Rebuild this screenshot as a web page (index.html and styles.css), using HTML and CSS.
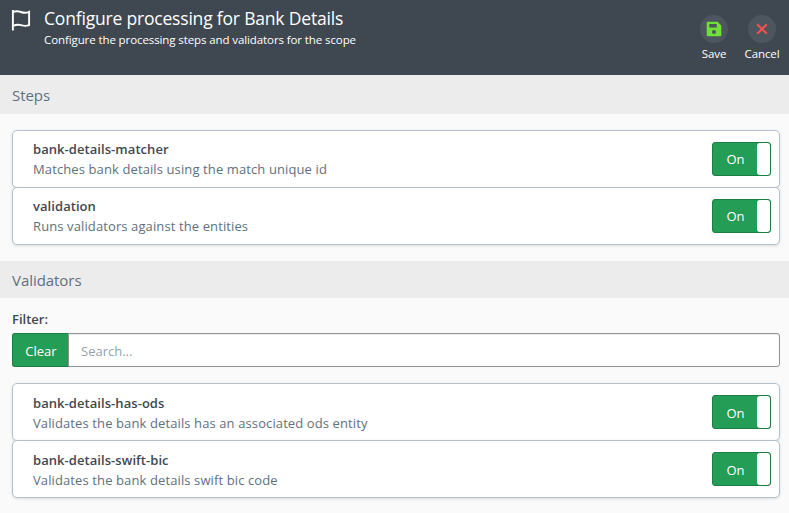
FILE: index.html
```html
<!DOCTYPE html>
<html lang="en">
<head>
<meta charset="utf-8">
<title>Configure processing</title>
<link rel="stylesheet" href="styles.css">
</head>
<body>
<header class="header">
  <svg class="flag" width="20" height="22" viewBox="0 0 20 22" fill="none" stroke="#fff" stroke-width="1.9">
    <path d="M1.900 1V21.500M2 3C5 1.800 7.500 2 10 3S15.500 4 18.100 2.800V16.200C15.500 17.200 12.500 17 10 16.200S5 15.500 2 17"/>
  </svg>
  <div class="heading">
    <h1 class="title">Configure processing for Bank Details</h1>
    <p class="subtitle">Configure the processing steps and validators for the scope</p>
  </div>
  <div class="actions">
    <button class="action"><span class="disc"><svg width="16" height="16" viewBox="0 0 16 16"><path fill="#6ee038" fill-rule="evenodd" d="M2 .7H11.500L15.300 4.500V14Q15.300 15.300 14 15.300H2Q.7 15.300 .7 14V2Q.7 .7 2 .7ZM3.300 3V6.500H10.800V3ZM8 8.900A2.100 2.100 0 1 0 8 13.100A2.100 2.100 0 1 0 8 8.900Z"/></svg></span><span>Save</span></button>
    <button class="action"><span class="disc"><svg width="12" height="12" viewBox="0 0 12 12"><path stroke="#f0524f" stroke-width="2.2" d="M1.200 1.200L10.800 10.800M10.800 1.200L1.200 10.800"/></svg></span><span>Cancel</span></button>
  </div>
</header>
<main>
  <h2 class="band band-first">Steps</h2>
  <section class="cards">
    <article class="card"><div class="info"><h3>bank-details-matcher</h3><p>Matches bank details using the match unique id</p></div><div class="toggle"><span class="on">On</span><span class="handle"></span></div></article>
    <article class="card"><div class="info"><h3>validation</h3><p>Runs validators against the entities</p></div><div class="toggle"><span class="on">On</span><span class="handle"></span></div></article>
  </section>
  <h2 class="band">Validators</h2>
  <label class="filter-label" for="q">Filter:</label>
  <div class="filter"><button class="clear">Clear</button><input id="q" class="search" type="text" placeholder="Search..."></div>
  <section class="cards cards-validators">
    <article class="card"><div class="info"><h3>bank-details-has-ods</h3><p>Validates the bank details has an associated ods entity</p></div><div class="toggle"><span class="on">On</span><span class="handle"></span></div></article>
    <article class="card"><div class="info"><h3>bank-details-swift-bic</h3><p>Validates the bank details swift bic code</p></div><div class="toggle"><span class="on">On</span><span class="handle"></span></div></article>
  </section>
</main>
</body>
</html>
```
FILE: styles.css
```css
* { box-sizing: border-box; }
body { margin: 0; background: #fafafa; color: #3f4851; font: 13px/20px "Segoe UI", "Open Sans", "Noto Sans", sans-serif; white-space: nowrap; overflow: hidden; }
h1, h2, h3, p { margin: 0; font-weight: 400; }
button, input { font: inherit; border: 0; padding: 0; margin: 0; }
.header { display: flex; height: 75px; background: #3f4851; color: #fff; padding: 0 9px 0 11px; }
.flag { margin-top: 9px; flex: none; }
.heading { margin-left: 13px; padding-top: 6px; flex: 1; }
.title { font-size: 17.5px; line-height: 24px; letter-spacing: -.19px; }
.subtitle { margin-top: 1px; font-size: 11.5px; line-height: 18px; letter-spacing: -.1px; }
.actions { display: flex; gap: 12px; padding-top: 15px; }
.action { display: flex; flex-direction: column; align-items: center; width: 36px; background: none; color: #fff; font-size: 11.5px; line-height: 16px; letter-spacing: -.1px; }
.disc { display: flex; align-items: center; justify-content: center; width: 28px; height: 28px; border-radius: 50%; background: #4d565e; margin-bottom: 3px; }
.band { height: 37px; padding-left: 12px; background: #ececec; color: #5f7080; font-size: 15px; line-height: 38px; letter-spacing: -.05px; }
.band-first { height: 39px; line-height: 41px; }
.cards { padding: 16px 9px 16px 12px; }
.card { display: flex; align-items: center; height: 58px; padding: 0 8px 0 20px; background: #fff; border: 1px solid #b4c0cc; border-radius: 5px; box-shadow: 0 1px 3px rgba(0, 0, 0, .12); }
.card + .card { margin-top: -1px; }
.info { flex: 1; color: #61707e; letter-spacing: .11px; }
.cards-validators .info { padding-top: 2px; }
.info h3 { font-size: 13px; font-weight: 600; color: #3f4851; letter-spacing: .06px; }
.toggle { display: flex; width: 59px; height: 34px; background: #249d57; border: 1px solid #1c7e45; border-radius: 3px; color: #fff; }
.on { flex: 1; text-align: center; line-height: 32px; padding-left: 1px; }
.cards-validators .on { line-height: 34px; }
.handle { width: 13px; background: #fff; border-radius: 3px; }
.filter-label { display: block; margin: 11px 12px 4px; font-weight: 600; }
.filter { display: flex; height: 34px; margin: 0 9px 0 12px; }
.clear { width: 57px; padding-top: 2px; background: #249d57; border: 1px solid #1c7e45; border-right: 0; border-radius: 3px 0 0 3px; color: #fff; }
.search { flex: 1; border: 1px solid #929292; border-radius: 0 3px 3px 0; padding: 1px 12px 0; background: #fff; box-shadow: inset 0 1px 1px rgba(0, 0, 0, .08); margin-left: -1px; }
.search::placeholder { color: #94a1ae; opacity: 1; }
```
